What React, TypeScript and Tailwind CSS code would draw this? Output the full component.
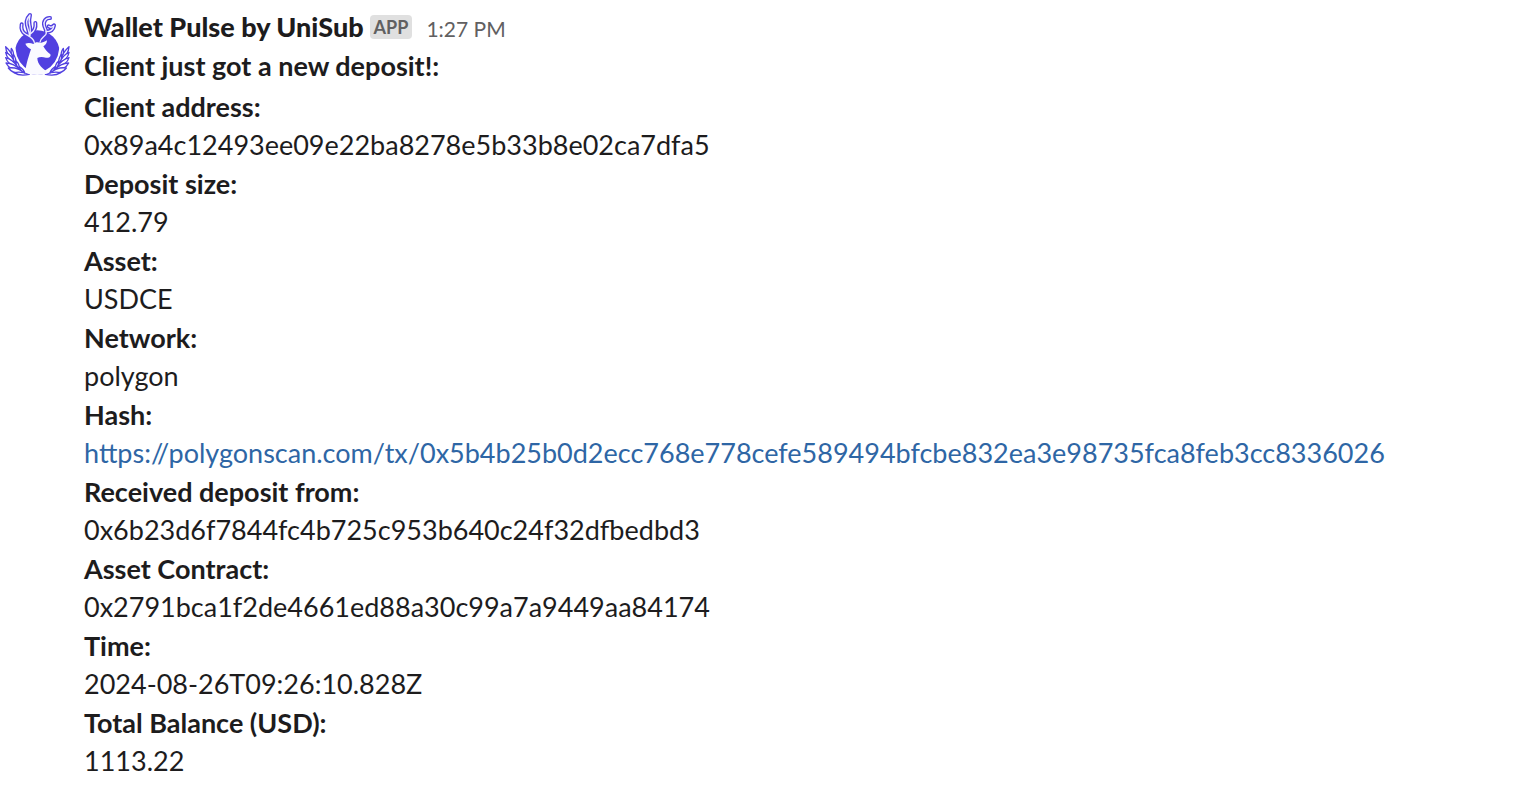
interface Field {
  label: string;
  value: string;
  isLink?: boolean;
}

const fields: Field[] = [
  { label: "Client address:", value: "0x89a4c12493ee09e22ba8278e5b33b8e02ca7dfa5" },
  { label: "Deposit size:", value: "412.79" },
  { label: "Asset:", value: "USDCE" },
  { label: "Network:", value: "polygon" },
  {
    label: "Hash:",
    value:
      "https://polygonscan.com/tx/0x5b4b25b0d2ecc768e778cefe589494bfcbe832ea3e98735fca8feb3cc8336026",
    isLink: true,
  },
  { label: "Received deposit from:", value: "0x6b23d6f7844fc4b725c953b640c24f32dfbedbd3" },
  { label: "Asset Contract:", value: "0x2791bca1f2de4661ed88a30c99a7a9449aa84174" },
  { label: "Time:", value: "2024-08-26T09:26:10.828Z" },
  { label: "Total Balance (USD):", value: "1113.22" },
];

const antlers = [
  "M103 112C100 99 88 94 76 87C66 81 63 69 65 58",
  "M88 93C90 80 78 64 80 49C81 41 85 35 90 30C87 42 86 50 89 60C92 70 91 80 90 92",
  "M92 86C102 79 108 68 106 54",
  "M120 112C120 100 131 97 137 89C143 80 135 70 133 63C129 50 137 38 150 39",
  "M138 80C150 80 160 74 162 61C157 67 151 68 146 64",
];

const Wreath = () => (
  <g strokeLinejoin="round" strokeLinecap="round">
    <path d="M38 132C41 163 58 190 86 205" fill="none" stroke="#fff" strokeWidth="17" />
    <g fill="#fff" stroke="#5140e0" strokeWidth="4">
      <path d="M17 125C27 134 36 145 40 160C28 154 18 142 17 125Z" />
      <path d="M17 142C29 147 39 159 45 173C31 168 20 158 17 142Z" />
      <path d="M17 158C31 162 44 172 53 186C36 183 22 174 17 158Z" />
      <path d="M18 174C35 174 51 184 62 196C44 196 26 190 18 174Z" />
      <path d="M25 189C43 186 61 193 74 203C55 208 36 203 25 189Z" />
      <path d="M42 203C57 199 73 202 88 208C71 212 54 211 42 203Z" />
      <path d="M34 130C40 138 42 147 40 156C34 149 32 140 34 130Z" />
      <path d="M40 148C46 156 49 166 47 176C41 168 38 158 40 148Z" />
      <path d="M48 168C55 174 59 182 58 192C51 186 47 178 48 168Z" />
      <path d="M58 185C65 189 72 196 74 204C65 200 59 193 58 185Z" />
    </g>
  </g>
);

const DeerLogo = () => (
  <svg viewBox="12 21 198 198" className="size-[66px]" role="img" aria-label="UniSub">
    <circle cx="112" cy="143" r="67" fill="#5140e0" />
    <Wreath />
    <g transform="matrix(-1 0 0 1 224 0)">
      <Wreath />
    </g>
    <g fill="none" strokeLinecap="round" strokeLinejoin="round">
      {antlers.map((d) => (
        <path key={d} d={d} stroke="#5140e0" strokeWidth="12" />
      ))}
      {antlers.map((d) => (
        <path key={d} d={d} stroke="#eeecff" strokeWidth="4" />
      ))}
    </g>
    {/* Head and neck */}
    <path
      d="M76 116C84 113 93 114 100 117C105 111 114 110 121 114C127 113 134 110 141 106C141 114 136 121 130 124C134 132 142 141 151 148C154 156 146 160 138 158C128 155 118 155 112 159C112 177 128 194 149 203C124 212 99 212 76 203C77 184 83 163 93 133C85 129 79 123 76 116Z"
      fill="#fafaff"
    />
  </svg>
);

const App = () => {
  return (
    <div className="min-h-screen bg-white px-1 pt-2 font-['Lato',sans-serif] text-[27px] text-[#1d1c1d]">
      <div className="flex items-start gap-3.5">
        <div className="shrink-0 pt-1">
          <DeerLogo />
        </div>
        <div className="min-w-0">
          {/* Sender */}
          <div className="flex h-[38px] items-center gap-3.5">
            <div className="flex items-center gap-1.5">
              <button className="font-black leading-[38px]">Wallet Pulse by UniSub</button>
              <span className="rounded-sm bg-[#e0e0e0] px-1 text-[18px] font-bold leading-6 text-[#616061]">
                APP
              </span>
            </div>
            <a href="#" className="pt-1 text-[21px] leading-8 text-[#616061]">1:27 PM</a>
          </div>

          {/* Message */}
          <p className="font-bold leading-10">Client just got a new deposit!:</p>
          <dl className="pt-px">
            {fields.map((field) => (
              <div key={field.label}>
                <dt className="font-bold leading-[39px]">{field.label}</dt>
                <dd className="leading-[38px]">
                  {field.isLink ? (
                    <a href={field.value} className="text-[#2e66a5]">{field.value}</a>
                  ) : (
                    field.value
                  )}
                </dd>
              </div>
            ))}
          </dl>
        </div>
      </div>
    </div>
  );
};

export default App;
